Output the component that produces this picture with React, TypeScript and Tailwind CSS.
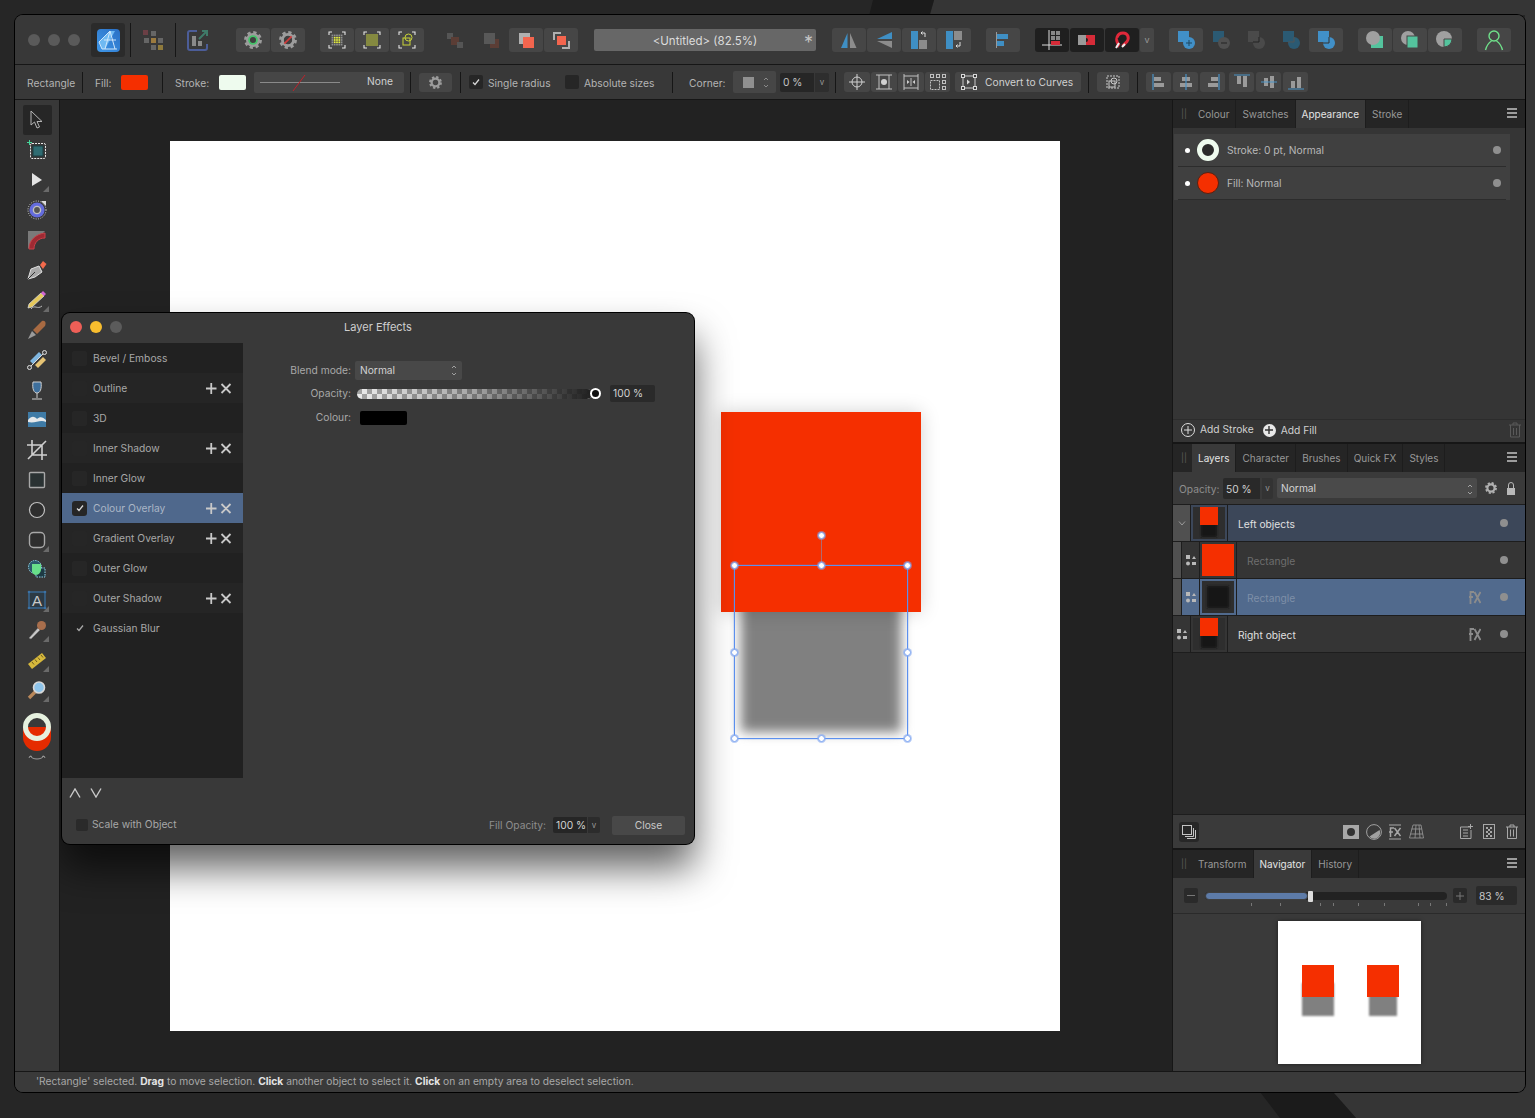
import type { ReactNode } from "react";

const RED = "#f52f00";

function Cog({ size = 18, color = "#9c9c9c", children }: { size?: number; color?: string; children?: ReactNode }) {
  return (
    <svg width={size} height={size} viewBox="0 0 20 20">
      <circle cx="10" cy="10" r="6" fill="none" stroke={color} strokeWidth="3.6" />
      <circle cx="10" cy="10" r="8.4" fill="none" stroke={color} strokeWidth="3" strokeDasharray="3.6 3" />
      {children}
    </svg>
  );
}

function Dot({ className = "" }: { className?: string }) {
  return <span className={`block w-2 h-2 rounded-full bg-[#8f8f8f] ${className}`} />;
}

function Sep({ className = "" }: { className?: string }) {
  return <span className={`block w-px bg-[#161616] ${className}`} />;
}

function Tb({ dark, wide, className = "", children }: { dark?: boolean; wide?: boolean; className?: string; children?: ReactNode }) {
  return (
    <div className={`${wide ? "w-[35px]" : "w-[34px]"} h-6 flex items-center justify-center rounded-[3px] ${dark ? "bg-[#1f1f1f]" : "bg-[#464646]"} ${className}`}>
      {children}
    </div>
  );
}

function Sb({ className = "", children }: { className?: string; children?: ReactNode }) {
  return <div className={`h-5 flex items-center justify-center rounded-[3px] bg-[#464646] ${className}`}>{children}</div>;
}

function Corners() {
  return <path d="M2 5V2H5M15 2H18V5M18 15V18H15M5 18H2V15" fill="none" stroke="#e6e6e6" strokeWidth="1.1" />;
}

function DotGrid({ n, step, size, color }: { n: number; step: number; size: number; color: (x: number, y: number) => string }) {
  const start = 10 - ((n - 1) * step + size) / 2;
  const cells = [];
  for (let y = 0; y < n; y++) {
    for (let x = 0; x < n; x++) {
      cells.push(<rect key={`${x}-${y}`} x={start + x * step} y={start + y * step} width={size} height={size} fill={color(x, y)} />);
    }
  }
  return <>{cells}</>;
}

function TopBar() {
  return (
    <div className="h-[50px] pt-px shrink-0 flex items-center bg-[#383838] border-b border-[#161616]">
      <div className="ml-[13px] flex gap-2">
        <span className="w-3 h-3 rounded-full bg-[#5a5a5a]" />
        <span className="w-3 h-3 rounded-full bg-[#5a5a5a]" />
        <span className="w-3 h-3 rounded-full bg-[#5a5a5a]" />
      </div>
      <div className="ml-[11px] w-[34px] h-[34px] rounded-[3px] bg-[#2b2b2b] flex items-center justify-center">
        <svg width="25" height="25" viewBox="0 0 25 25">
          <defs>
            <linearGradient id="appg" x1="0" y1="1" x2="1" y2="0">
              <stop offset="0" stopColor="#3f97e8" />
              <stop offset="1" stopColor="#2a6fc4" />
            </linearGradient>
          </defs>
          <rect x="1" y="1" width="23" height="23" rx="4" fill="url(#appg)" />
          <path d="M3 14L14 3H19L9 21H6Z" fill="#6fb9f2" />
          <path d="M3 14L14 3M14 3L19 21M9 21L14 3M3 14L6 21H21M8 12H20" fill="none" stroke="#cfe6fa" strokeWidth="1" />
        </svg>
      </div>
      <Sep className="ml-[5px] h-[34px]" />
      <svg className="ml-3" width="20" height="20" viewBox="0 0 20 20">
        <rect x="0" y="0" width="5" height="5" fill="#6b3f45" />
        <rect x="8" y="1" width="5" height="5" fill="#666" />
        <rect x="1" y="8" width="5" height="5" fill="#666" />
        <rect x="8" y="8" width="5" height="5" fill="#9b7a3f" />
        <rect x="15" y="8" width="5" height="5" fill="#666" />
        <rect x="8" y="15" width="5" height="5" fill="#666" />
        <rect x="15" y="15" width="5" height="5" fill="#8f7a3c" />
      </svg>
      <Sep className="ml-3 h-[34px]" />
      <svg className="ml-[11px]" width="22" height="22" viewBox="0 0 22 22">
        <path d="M10 2H3a2 2 0 0 0-2 2v15a2 2 0 0 0 2 2h15a2 2 0 0 0 2-2v-4" fill="none" stroke="#4c5d98" strokeWidth="2" />
        <rect x="5" y="7" width="4" height="10" fill="#8a8a8a" />
        <rect x="11" y="12" width="4" height="5" fill="#8a8a8a" />
        <path d="M12 10L20 2M15 2H20V7" fill="none" stroke="#3f7a68" strokeWidth="2" />
      </svg>
      <div className="ml-[27px] flex gap-px">
        <Tb>
          <Cog>
            <circle cx="10" cy="10" r="4.4" fill="#3f3f3f" stroke="#45c46a" strokeWidth="2" />
          </Cog>
        </Tb>
        <Tb>
          <Cog>
            <circle cx="10" cy="10" r="4.6" fill="#3f3f3f" />
            <path d="M6 14L14 6" stroke="#d03a3a" strokeWidth="2" />
          </Cog>
        </Tb>
      </div>
      <div className="ml-[15px] flex gap-px">
        <Tb>
          <svg width="20" height="20" viewBox="0 0 20 20">
            <Corners />
            <DotGrid n={5} step={2.3} size={1.7} color={(x, y) => (x > 0 && x < 4 && y > 0 && y < 4 ? "#e9f23e" : "#8f8f8f")} />
          </svg>
        </Tb>
        <Tb>
          <svg width="20" height="20" viewBox="0 0 20 20">
            <Corners />
            <DotGrid n={6} step={2} size={1.3} color={() => "#dbe63a"} />
          </svg>
        </Tb>
        <Tb>
          <svg width="20" height="20" viewBox="0 0 20 20">
            <Corners />
            <rect x="6" y="8" width="7" height="7" fill="none" stroke="#c9d436" />
            <circle cx="11.5" cy="7.5" r="3.5" fill="none" stroke="#c9d436" />
          </svg>
        </Tb>
      </div>
      <div className="ml-[14px] flex gap-px">
        <Tb wide className="bg-transparent">
          <svg width="17" height="17" viewBox="0 0 17 17">
            <rect x="0" y="1" width="6" height="6" fill="#555" />
            <rect x="4" y="5" width="8" height="8" fill="#5b3d35" />
            <rect x="10" y="10" width="6" height="6" fill="#555" />
          </svg>
        </Tb>
        <Tb className="bg-transparent">
          <svg width="17" height="17" viewBox="0 0 17 17">
            <rect x="7" y="7" width="9" height="9" fill="#5b3d35" />
            <rect x="1" y="1" width="11" height="11" fill="#585858" />
          </svg>
        </Tb>
        <Tb>
          <svg width="17" height="17" viewBox="0 0 17 17">
            <rect x="1" y="1" width="11" height="11" fill="#b0b0b0" />
            <rect x="5" y="5" width="11" height="11" fill="#f3654e" />
          </svg>
        </Tb>
        <Tb>
          <svg width="17" height="17" viewBox="0 0 17 17">
            <path d="M1 8V1H8M16 9V16H9" fill="none" stroke="#b0b0b0" strokeWidth="2" />
            <rect x="4" y="4" width="9" height="9" fill="#f3654e" />
          </svg>
        </Tb>
      </div>
      <div className="ml-[16px] w-[222px] h-[22px] rounded-[2px] bg-[#676767] flex items-center relative">
        <span className="w-full text-center text-[#dcdcdc] text-[11.5px] pt-[3px]">&lt;Untitled&gt; (82.5%)</span>
        <span className="absolute right-[3px] top-0 text-[#c4c4c4] text-[18px]">*</span>
      </div>
      <div className="ml-4 flex gap-px">
        <Tb>
          <svg width="20" height="20" viewBox="0 0 20 20">
            <path d="M8.5 3V18H2Z" fill="#3f8fc4" />
            <path d="M11 3V18H17.5Z" fill="#8c8c8c" />
          </svg>
        </Tb>
        <Tb>
          <svg width="20" height="20" viewBox="0 0 20 20">
            <path d="M18 2V9H3Z" fill="#3f8fc4" />
            <path d="M18 18V11H3Z" fill="#8c8c8c" />
          </svg>
        </Tb>
        <Tb>
          <svg width="20" height="20" viewBox="0 0 20 20">
            <rect x="2" y="1" width="7" height="18" fill="#3f8fc4" />
            <rect x="10" y="10" width="8" height="9" fill="#8c8c8c" />
            <path d="M16 7V3H12M13.5 1.5L12 3L13.5 4.5" fill="none" stroke="#ddd" />
          </svg>
        </Tb>
        <Tb>
          <svg width="20" height="20" viewBox="0 0 20 20">
            <rect x="2" y="1" width="7" height="18" fill="#3f8fc4" />
            <rect x="10" y="1" width="8" height="9" fill="#8c8c8c" />
            <path d="M16 12V16H12M13.5 14.5L12 16L13.5 17.5" fill="none" stroke="#ddd" />
          </svg>
        </Tb>
      </div>
      <Tb className="ml-[15px]">
        <svg width="18" height="18" viewBox="0 0 18 18">
          <path d="M2.5 1V17" stroke="#999" />
          <rect x="3" y="3" width="11" height="5" fill="#3f8fc4" />
          <rect x="3" y="10" width="7" height="5" fill="#3f8fc4" />
        </svg>
      </Tb>
      <div className="ml-[15px] flex gap-px">
        <Tb dark>
          <svg width="22" height="22" viewBox="0 0 22 22">
            <path d="M1 16H21M8 1V21" stroke="#ddd" />
            <rect x="10" y="2" width="4" height="4" fill="#888" />
            <rect x="15" y="2" width="4" height="4" fill="#888" />
            <rect x="10" y="7" width="4" height="4" fill="#888" />
            <rect x="15" y="7" width="4" height="4" fill="#888" />
            <rect x="10" y="12" width="9" height="4" fill="#d62b38" />
          </svg>
        </Tb>
        <Tb dark>
          <svg width="20" height="14" viewBox="0 0 20 14">
            <rect x="1" y="2" width="8" height="10" fill="#9a9a9a" />
            <path d="M9 2H18V12H9V9a2 2 0 0 0 0-4Z" fill="#d62b38" />
          </svg>
        </Tb>
        <Tb dark>
          <svg width="20" height="20" viewBox="0 0 20 20">
            <path d="M5 17L6.5 14.5C3 10 5 3 11 3C16 3 17.5 8 15 11.5L10.5 16" fill="none" stroke="#e0283a" strokeWidth="3" />
            <path d="M4 18L7 13M10 17L13 14" stroke="#eee" strokeWidth="2" />
            <path d="M6 9.5L10 6.5" stroke="#1f1f1f" strokeWidth="2" />
          </svg>
        </Tb>
        <div className="w-3.5 h-6 rounded-[2px] bg-[#464646] flex items-center justify-center text-[#999] text-[9px]">v</div>
      </div>
      <div className="ml-[15px] flex gap-px">
        <Tb>
          <svg width="20" height="20" viewBox="0 0 20 20">
            <rect x="2" y="1" width="11" height="11" fill="#4190c8" />
            <circle cx="13" cy="13" r="6" fill="#4190c8" />
            <path d="M10 13H16M13 10V16" stroke="#1c4660" />
          </svg>
        </Tb>
        <Tb className="bg-transparent">
          <svg width="20" height="20" viewBox="0 0 20 20">
            <rect x="2" y="1" width="11" height="11" fill="#2b5a73" />
            <circle cx="13" cy="13" r="6" fill="#505050" />
            <path d="M10 13H16" stroke="#222" />
          </svg>
        </Tb>
        <Tb className="bg-transparent">
          <svg width="20" height="20" viewBox="0 0 20 20">
            <rect x="2" y="1" width="11" height="11" fill="#4a4a4a" />
            <circle cx="13" cy="13" r="6" fill="#4a4a4a" />
            <path d="M13 7V12H7" fill="none" stroke="#222" />
          </svg>
        </Tb>
        <Tb className="bg-transparent">
          <svg width="20" height="20" viewBox="0 0 20 20">
            <rect x="2" y="1" width="11" height="11" fill="#2b5a73" />
            <circle cx="13" cy="13" r="6" fill="#2b5a73" />
            <path d="M13 7V12H7" fill="none" stroke="#555" />
          </svg>
        </Tb>
        <Tb>
          <svg width="20" height="20" viewBox="0 0 20 20">
            <rect x="2" y="1" width="11" height="11" fill="#4190c8" />
            <circle cx="13" cy="13" r="6" fill="#4190c8" />
            <path d="M13 7V13H7" fill="none" stroke="#333" />
          </svg>
        </Tb>
      </div>
      <div className="ml-[15px] flex gap-px">
        <Tb>
          <svg width="20" height="20" viewBox="0 0 20 20">
            <rect x="6" y="6" width="12" height="12" fill="#54c39d" />
            <circle cx="8" cy="8" r="7" fill="#a0a0a0" />
          </svg>
        </Tb>
        <Tb>
          <svg width="20" height="20" viewBox="0 0 20 20">
            <circle cx="8" cy="8" r="7" fill="#a0a0a0" />
            <rect x="7" y="6" width="11" height="12" fill="#54c39d" stroke="#464646" />
          </svg>
        </Tb>
        <Tb>
          <svg width="20" height="20" viewBox="0 0 20 20">
            <circle cx="9" cy="9" r="8" fill="#a0a0a0" />
            <path d="M9 9H17a8 8 0 0 1-8 8Z" fill="#54c39d" stroke="#464646" />
          </svg>
        </Tb>
      </div>
      <Tb className="ml-[15px]">
        <svg width="20" height="22" viewBox="0 0 20 22">
          <circle cx="10" cy="7" r="5" fill="none" stroke="#6fe08a" strokeWidth="1.4" />
          <path d="M1.5 21C3 15 6 13 7.5 12M18.5 21C17 15 14 13 12.5 12" fill="none" stroke="#6fe08a" strokeWidth="1.4" />
        </svg>
      </Tb>
    </div>
  );
}

function Check({ on, className = "" }: { on?: boolean; className?: string }) {
  return (
    <span className={`flex items-center justify-center rounded-[2px] bg-[#262626] ${className}`}>
      {on && (
        <svg width="8" height="8" viewBox="0 0 8 8">
          <path d="M1 4.5L3 6.5L7 1.5" fill="none" stroke="#d8d8d8" strokeWidth="1.3" />
        </svg>
      )}
    </span>
  );
}

function ContextBar() {
  return (
    <div className="h-[35px] shrink-0 flex items-center bg-[#383838] border-b border-[#161616] text-[10.25px] text-[#b4b4b4]">
      <span className="ml-[12px] w-[48px] pt-1">Rectangle</span>
      <Sep className="ml-[7px] h-[21px]" />
      <span className="ml-3 w-[17px] pt-1">Fill:</span>
      <span className="ml-[9px] w-[27px] h-[15px] rounded-[2px] bg-[#f52f00]" />
      <Sep className="ml-[14px] h-[21px]" />
      <span className="ml-3 w-[35px] pt-1">Stroke:</span>
      <span className="ml-[9px] w-[27px] h-[15px] rounded-[2px] bg-[#eefbee]" />
      <div className="ml-2 w-[150px] h-[21px] rounded-[2px] bg-[#464646] flex items-center relative">
        <span className="ml-1.5 w-[80px] h-px bg-[#8a8a8a]" />
        <svg className="absolute left-[37px] top-[3px]" width="16" height="16" viewBox="0 0 16 16">
          <path d="M2 16L14 0" stroke="#c0222c" strokeWidth="1" />
        </svg>
        <span className="absolute right-[11px] text-[#d0d0d0]">None</span>
      </div>
      <Sep className="ml-1.5 h-[21px]" />
      <Sb className="ml-2 w-[33px] h-[19px]">
        <Cog size={13} />
      </Sb>
      <Sep className="ml-2 h-[21px]" />
      <Check on className="ml-2 w-[14px] h-[14px]" />
      <span className="ml-[5px] w-[63px] pt-1">Single radius</span>
      <Check className="ml-[14px] w-[14px] h-[14px]" />
      <span className="ml-[5px] w-[70px] pt-1">Absolute sizes</span>
      <Sep className="ml-[18px] h-[21px]" />
      <span className="ml-4 w-[37px] pt-1">Corner:</span>
      <div className="ml-[7px] w-[43px] h-[22px] rounded-[2px] bg-[#464646] flex items-center">
        <span className="ml-2.5 w-[11px] h-[11px] bg-[#909090]" />
        <svg className="ml-[9px]" width="6" height="13" viewBox="0 0 6 13">
          <path d="M1 4L3 2L5 4M1 9L3 11L5 9" fill="none" stroke="#8a8a8a" />
        </svg>
      </div>
      <div className="ml-1 w-[34px] h-[19px] rounded-l-[2px] bg-[#262626] flex items-center pl-[3px] pt-0.5 text-[#c4c4c4]">0 %</div>
      <div className="ml-px w-3.5 h-[19px] rounded-r-[2px] bg-[#2e2e2e] flex items-center justify-center text-[8px] text-[#999]">v</div>
      <Sep className="ml-1.5 h-[21px]" />
      <div className="ml-2 flex gap-px">
        <Sb className="w-[26px]">
          <svg width="16" height="16" viewBox="0 0 16 16">
            <circle cx="8" cy="8" r="5" fill="none" stroke="#d0d0d0" />
            <path d="M8 0V16M0 8H16" stroke="#d0d0d0" />
          </svg>
        </Sb>
        <Sb className="w-[26px]">
          <svg width="16" height="16" viewBox="0 0 16 16">
            <path d="M0 1H16M0 15H16M3 1V15M13 1V15" fill="none" stroke="#c0c0c0" />
            <circle cx="8" cy="8" r="3" fill="#d0d0d0" />
          </svg>
        </Sb>
        <Sb className="w-[26px]">
          <svg width="16" height="16" viewBox="0 0 16 16">
            <path d="M1 0V16M15 0V16M1 2H15M1 14H15M8 4V12" fill="none" stroke="#c0c0c0" />
            <path d="M4 6L6.5 8L4 10ZM12 6L9.5 8L12 10Z" fill="#d0d0d0" />
          </svg>
        </Sb>
        <Sb className="w-[25px]">
          <svg width="16" height="16" viewBox="0 0 16 16" fill="none" stroke="#c0c0c0">
            <rect x="0.5" y="0.5" width="3" height="3" />
            <rect x="6.5" y="0.5" width="3" height="3" />
            <rect x="12.5" y="0.5" width="3" height="3" />
            <rect x="12.5" y="6.5" width="3" height="3" />
            <rect x="12.5" y="12.5" width="3" height="3" />
            <rect x="0.5" y="6.5" width="9" height="9" strokeDasharray="2 1" />
          </svg>
        </Sb>
      </div>
      <Sb className="ml-[5px] w-[126px] justify-start pl-1.5">
        <svg className="mr-2" width="16" height="16" viewBox="0 0 16 16">
          <rect x="2" y="2" width="12" height="12" fill="none" stroke="#c8c8c8" />
          <rect x="0.5" y="0.5" width="3" height="3" fill="#383838" stroke="#d8d8d8" />
          <rect x="12.5" y="0.5" width="3" height="3" fill="#383838" stroke="#d8d8d8" />
          <rect x="0.5" y="12.5" width="3" height="3" fill="#383838" stroke="#d8d8d8" />
          <rect x="12.5" y="12.5" width="3" height="3" fill="#383838" stroke="#d8d8d8" />
          <path d="M6 5.5L9 8L6 10.5Z" fill="#d8d8d8" />
        </svg>
        <span className="text-[#d0d0d0] pt-0.5">Convert to Curves</span>
      </Sb>
      <Sep className="ml-[7px] h-[21px]" />
      <Sb className="ml-[8px] w-[32px]">
        <svg width="18" height="18" viewBox="0 0 18 18" fill="none" stroke="#c8c8c8">
          <rect x="3" y="3" width="12" height="12" strokeDasharray="2 1" />
          <rect x="5" y="8" width="6" height="6" />
          <circle cx="10" cy="8" r="3" />
        </svg>
      </Sb>
      <Sep className="ml-2 h-[21px]" />
      <div className="ml-2 flex gap-0.5">
        <AlignBtn d="M3 1V17" a="M4 4H11V8H4ZM4 10H14V14H4Z" />
        <AlignBtn d="M9 1V17" a="M5 4H13V8H5ZM3 10H15V14H3Z" />
        <AlignBtn d="M15 1V17" a="M7 4H14V8H7ZM4 10H14V14H4Z" />
      </div>
      <div className="ml-1 flex gap-0.5">
        <AlignBtn d="M1 2H17" a="M4 3H8V11H4ZM10 3H14V14H10Z" />
        <AlignBtn d="M1 9H17" a="M4 5H8V13H4ZM10 3H14V15H10Z" />
        <AlignBtn d="M1 16H17" a="M4 8H8V15H4ZM10 4H14V15H10Z" />
      </div>
    </div>
  );
}

function AlignBtn({ d, a }: { d: string; a: string }) {
  return (
    <Sb className="w-[25px]">
      <svg width="18" height="18" viewBox="0 0 18 18">
        <path d={a} fill="#9a9a9a" />
        <path d={d} stroke="#4a93c6" strokeWidth="1.2" />
      </svg>
    </Sb>
  );
}

function Flyout() {
  return (
    <svg className="absolute right-[3px] bottom-[3px]" width="6" height="6" viewBox="0 0 6 6">
      <path d="M6 0V6H0Z" fill="#6a6a6a" />
    </svg>
  );
}

const TOOLS: { node: ReactNode; fly?: boolean; active?: boolean }[] = [
  { active: true, node: <path d="M4 1V15L7.5 12L10 18L12.5 17L10 11.5H15Z" fill="#262626" stroke="#b5b5b5" /> },
  {
    node: (
      <>
        <rect x="6" y="6" width="10" height="10" fill="#2f6c72" stroke="#1d3d40" />
        <rect x="3.5" y="3.5" width="15" height="15" rx="1.5" fill="none" stroke="#e8e8e8" strokeDasharray="2 1" />
        <path d="M0 2.5H5M2.5 0V5" stroke="#46d69a" />
      </>
    ),
  },
  { fly: true, node: <path d="M5 3V16L15 10Z" fill="#e4e4e4" /> },
  {
    node: (
      <>
        <circle cx="10" cy="10" r="9" fill="none" stroke="#d0d0d0" strokeDasharray="1 1.4" />
        <circle cx="10" cy="10" r="7.6" fill="#646cdc" />
        <circle cx="10" cy="10" r="3.6" fill="#555" stroke="#c0c0c0" strokeWidth="1.4" />
        <path d="M14 1H19V6Z" fill="#dcdcdc" />
      </>
    ),
  },
  {
    node: (
      <>
        <path d="M1 19V1H18L1 19Z" fill="#7a7a7a" />
        <path d="M2 19C2 10 9 4 18 3V8C11 8 7 13 7 19Z" fill="#9e2a33" stroke="#c84048" />
      </>
    ),
  },
  {
    node: (
      <>
        <path d="M1 19L4 9L12 6L15 12L8 17Z" fill="#a8a8a8" stroke="#e0e0e0" />
        <path d="M1 19L8 12" stroke="#333" />
        <path d="M13 5L16 1L19.5 4L16 9Z" fill="#f36a4c" />
      </>
    ),
  },
  {
    fly: true,
    node: (
      <>
        <path d="M2 14L14 3L17 6L5 17L1 18Z" fill="#e6c95a" stroke="#d8d8d8" strokeWidth="0.8" />
        <path d="M14 3L16 1L19 4L17 6Z" fill="#d264d0" />
        <path d="M4 19C8 14 10 20 15 16" fill="none" stroke="#b8b8b8" />
      </>
    ),
  },
  {
    node: (
      <>
        <path d="M1 19L5 11L9 15Z" fill="#9a9a9a" />
        <path d="M6 10L15 1C19 0 19 4 18 6L10 14Z" fill="#a86a42" />
      </>
    ),
  },
  {
    node: (
      <>
        <path d="M3 11L12 2L15 5L6 14Z" fill="#7fb6e0" />
        <path d="M8 15L16 7L19 10L11 18Z" fill="#e6c374" />
        <path d="M2 18L18 2" stroke="#d8d8d8" />
        <circle cx="2.5" cy="17.5" r="2" fill="#444" stroke="#ddd" />
        <circle cx="17.5" cy="2.5" r="2" fill="#444" stroke="#ddd" />
      </>
    ),
  },
  {
    node: (
      <>
        <path d="M6 2C5 9 7 13 10 13C13 13 15 9 14 2Z" fill="#3e6f9c" stroke="#cfcfcf" />
        <path d="M10 13V18M5 19H15" stroke="#cfcfcf" />
      </>
    ),
  },
  {
    node: (
      <>
        <rect x="1" y="2" width="18" height="15" fill="#3f7ba6" />
        <path d="M1 10C5 5 8 7 10 9C13 6 16 7 19 10V12C13 9 8 14 1 12Z" fill="#e4e8ea" />
      </>
    ),
  },
  {
    node: <path d="M5 0V15H20M0 5H15V20M1 19L19 1" fill="none" stroke="#cfcfcf" strokeWidth="1.6" />,
  },
  { node: <rect x="2.5" y="2.5" width="15" height="15" rx="1" fill="#2a3233" stroke="#a8a8a8" strokeWidth="1.4" /> },
  { node: <circle cx="10" cy="10" r="7.5" fill="#2e2e2e" stroke="#c0c0c0" strokeWidth="1.2" /> },
  { fly: true, node: <rect x="2.5" y="2.5" width="15" height="15" rx="4" fill="#2e2e2e" stroke="#a8a8a8" strokeWidth="1.4" /> },
  {
    node: (
      <>
        <circle cx="8" cy="7" r="6.5" fill="#2b5a6a" stroke="#8fd0e8" strokeDasharray="1.5 1" />
        <rect x="9" y="8" width="9" height="9" fill="#1d3a44" stroke="#8fd0e8" strokeDasharray="1.5 1" />
        <path d="M5 4H14V10A6 6 0 0 1 8 15A6 6 0 0 1 5 12Z" fill="#68e08a" />
      </>
    ),
  },
  {
    fly: true,
    node: (
      <>
        <rect x="2" y="2" width="16" height="16" fill="#2d3a44" stroke="#3a72a6" strokeWidth="1.2" />
        <circle cx="2" cy="2" r="1.3" fill="#3a72a6" />
        <circle cx="18" cy="2" r="1.3" fill="#3a72a6" />
        <circle cx="2" cy="18" r="1.3" fill="#3a72a6" />
        <circle cx="18" cy="18" r="1.3" fill="#3a72a6" />
        <text x="10" y="15.5" fontSize="15" textAnchor="middle" fill="#c8c8c8" fontFamily="Liberation Sans, sans-serif">A</text>
      </>
    ),
  },
  {
    fly: true,
    node: (
      <>
        <path d="M2 18L11 8L13 10L4 19Z" fill="#c8c8c8" stroke="#777" strokeWidth="0.5" />
        <circle cx="14.5" cy="5.5" r="4.5" fill="#a86e4c" />
      </>
    ),
  },
  {
    fly: true,
    node: (
      <>
        <path d="M1 14L15 3L19 8L5 19Z" fill="#d6b83c" />
        <path d="M5 12L7 14.5M8 9.5L10 12M11 7.5L13 10M14 5L16 7.5" stroke="#6e5d1e" />
      </>
    ),
  },
  {
    fly: true,
    node: (
      <>
        <path d="M2 18L8 12" stroke="#b8875a" strokeWidth="3.4" />
        <circle cx="12" cy="7.5" r="5.5" fill="#8ec4ea" stroke="#d8d8d8" strokeWidth="1.6" />
      </>
    ),
  },
];

function ToolRail() {
  return (
    <div className="w-[45px] shrink-0 flex flex-col items-center pt-[5px] bg-[#383838] border-r border-[#161616]">
      {TOOLS.map((t, i) => (
        <div key={i} className={`relative w-[29px] h-[30px] flex items-center justify-center rounded-[2px] ${t.active ? "bg-[#262626]" : ""}`}>
          <svg width="20" height="20" viewBox="0 0 20 20">
            {t.node}
          </svg>
          {t.fly && <Flyout />}
        </div>
      ))}
      <svg className="mt-[7px]" width="30" height="50" viewBox="0 0 30 50">
        <circle cx="15" cy="25" r="14" fill="#e52b00" />
        <rect x="1" y="15" width="28" height="10" fill="#e52b00" />
        <circle cx="15" cy="15" r="9.5" fill="#3a3a3a" />
        <path d="M5.5 15H24.5A9.5 9.5 0 0 1 5.5 15Z" fill="#e52b00" />
        <circle cx="15" cy="15" r="11.5" fill="none" stroke="#e6f1df" strokeWidth="5" />
        <path d="M8 44C11 48 19 48 22 44M8 44L7 46M8 44L10 44.5M22 44L23 46M22 44L20 44.5" fill="none" stroke="#999" />
      </svg>
    </div>
  );
}

function Handle({ className }: { className: string }) {
  return <span className={`absolute w-[7px] h-[7px] rounded-full bg-white border border-[#7ea6f2] shadow-[0_0_0_1px_rgba(130,165,240,0.55)] ${className}`} />;
}

const EFFECTS: { name: string; plus?: boolean; shade?: boolean; on?: boolean; tick?: boolean }[] = [
  { name: "Bevel / Emboss", shade: true },
  { name: "Outline", plus: true },
  { name: "3D", shade: true },
  { name: "Inner Shadow", plus: true },
  { name: "Inner Glow", shade: true },
  { name: "Colour Overlay", plus: true, on: true },
  { name: "Gradient Overlay", plus: true },
  { name: "Outer Glow" },
  { name: "Outer Shadow", plus: true },
  { name: "Gaussian Blur", tick: true },
];

function LayerEffects() {
  return (
    <div className="absolute left-[2px] top-[213px] w-[632px] h-[531px] rounded-[8px] bg-[#393939] ring-1 ring-black flex flex-col text-[10.25px] text-[#a8a8a8] shadow-[0_24px_38px_rgba(0,0,0,0.62)] overflow-hidden">
      <div className="h-[30px] pb-0.5 shrink-0 flex items-center relative">
        <span className="ml-2 w-3 h-3 rounded-full bg-[#ee5f57]" />
        <span className="ml-2 w-3 h-3 rounded-full bg-[#f8bd2e]" />
        <span className="ml-2 w-3 h-3 rounded-full bg-[#5b5b5b]" />
        <span className="absolute inset-x-0 text-center text-[11px] text-[#cfcfcf]">Layer Effects</span>
      </div>
      <div className="flex h-[435px] shrink-0">
        <div className="w-[181px] bg-[#212121]">
          {EFFECTS.map((e) => (
            <div
              key={e.name}
              className={`h-[30px] flex items-center relative ${e.on ? "bg-[#4f688c]" : e.plus && !e.on ? "bg-[#252525]" : "bg-[#212121]"}`}
            >
              {e.on ? (
                <Check on className="ml-[10px] w-[15px] h-[15px] bg-[#222] rounded-[3px]" />
              ) : e.tick ? (
                <svg className="ml-[13px] mr-[2px]" width="10" height="10" viewBox="0 0 10 10">
                  <path d="M2 5.5L4 7.5L8 2.5" fill="none" stroke="#a8a8a8" strokeWidth="1.3" />
                </svg>
              ) : (
                <span className="ml-[10px] w-[15px] h-[15px] rounded-[2px] bg-[#262626]" />
              )}
              <span className={`ml-[6px] pt-0.5 ${e.on ? "text-[#aab6c6]" : ""}`}>{e.name}</span>
              {e.plus && (
                <svg className="absolute left-[144px]" width="26" height="11" viewBox="0 0 26 11">
                  <path d="M0 5.5H10.5M5.25 0V11M15.5 1L24.5 10M24.5 1L15.5 10" stroke="#c8c8c8" strokeWidth="1.8" />
                </svg>
              )}
            </div>
          ))}
        </div>
        <div className="flex-1 pt-[18px]">
          <div className="flex items-center h-[19px]">
            <span className="w-[108px] text-right">Blend mode:</span>
            <div className="ml-1 w-[107px] h-[19px] rounded-[2px] bg-[#484848] flex items-center justify-between px-[5px] text-[#d2d2d2]">
              Normal
              <svg width="6" height="13" viewBox="0 0 6 13">
                <path d="M1 4L3 2L5 4M1 9L3 11L5 9" fill="none" stroke="#a0a0a0" />
              </svg>
            </div>
          </div>
          <div className="flex items-center h-[17px] mt-[5px]">
            <span className="w-[108px] text-right">Opacity:</span>
            <div className="ml-1.5 w-[235px] h-2.5 shrink-0 rounded-full overflow-hidden bg-[conic-gradient(#ececec_25%,#a4a4a4_0_50%,#ececec_0_75%,#a4a4a4_0)] bg-[length:10px_10px]">
              <div className="w-full h-full bg-gradient-to-r from-transparent via-[rgba(31,31,31,0.35)] to-[#1f1f1f]" />
            </div>
            <span className="ml-[-2px] w-[11px] h-[11px] rounded-full border-2 border-white bg-[#111] shrink-0" />
            <div className="ml-[9px] w-[45px] h-[17px] rounded-[2px] bg-[#2a2a2a] flex items-center pl-[3px] text-[#d2d2d2]">100 %</div>
          </div>
          <div className="flex items-center h-[14px] mt-[9px]">
            <span className="w-[108px] text-right">Colour:</span>
            <span className="ml-[9px] w-[47px] h-[14px] rounded-[2px] bg-black" />
          </div>
        </div>
      </div>
      <div className="h-[30px] shrink-0 flex items-center pl-[7px] gap-[9px]">
        <svg width="12" height="10" viewBox="0 0 12 10">
          <path d="M1 9.5L6 1L11 9.5" fill="none" stroke="#c8c8c8" strokeWidth="1.4" />
        </svg>
        <svg width="12" height="10" viewBox="0 0 12 10">
          <path d="M1 0.5L6 9L11 0.5" fill="none" stroke="#c8c8c8" strokeWidth="1.4" />
        </svg>
      </div>
      <div className="flex items-center h-[34px] shrink-0 pl-[14px]">
        <span className="w-3 h-3 rounded-[2px] bg-[#2a2a2a]" />
        <span className="ml-1">Scale with Object</span>
        <span className="ml-auto text-[#8e8e8e] pt-0.5">Fill Opacity:</span>
        <div className="ml-[7px] w-[34px] h-4 rounded-l-[2px] bg-[#262626] flex items-center pl-[3px] pt-0.5 text-[#d2d2d2]">100 %</div>
        <div className="ml-px w-3 h-4 rounded-r-[2px] bg-[#2c2c2c] flex items-center justify-center text-[8px] text-[#999]">v</div>
        <div className="ml-[12px] mr-[9px] w-[73px] h-[19px] rounded-[2px] bg-[#484848] flex items-center justify-center pt-0.5 text-[#c8c8c8]">Close</div>
      </div>
    </div>
  );
}

function Canvas() {
  return (
    <div className="flex-1 relative overflow-hidden bg-[#222222]">
      <div className="absolute left-[110px] top-[41px] w-[890px] h-[890px] bg-white" />
      <div className="absolute left-[681px] top-[472px] w-[160px] h-[160px] bg-[#808080] blur-[6px]" />
      <div className="absolute left-[661px] top-[312px] w-[200px] h-[200px] bg-[#f52f00] shadow-[0_0_18px_rgba(0,0,0,0.18)]" />
      <div className="absolute left-[674px] top-[465px] w-[174px] h-[174px] border border-[#5c90ee] shadow-[0_0_1px_#5c90ee]">
        <span className="absolute left-[86px] top-[-30px] w-px h-[30px] bg-[#b06a70]" />
        <Handle className="left-[83px] top-[-34px]" />
        <Handle className="left-[-4px] top-[-4px]" />
        <Handle className="left-[83px] top-[-4px]" />
        <Handle className="right-[-4px] top-[-4px]" />
        <Handle className="left-[-4px] top-[83px]" />
        <Handle className="right-[-4px] top-[83px]" />
        <Handle className="left-[-4px] bottom-[-4px]" />
        <Handle className="left-[83px] bottom-[-4px]" />
        <Handle className="right-[-4px] bottom-[-4px]" />
      </div>
      <LayerEffects />
    </div>
  );
}

function Tabs({ tabs, active }: { tabs: string[]; active: string }) {
  return (
    <div className="h-7 shrink-0 flex items-stretch bg-[#252525] text-[10px] relative">
      <span className="ml-[8px] mr-[2px] self-center text-[#5a5a5a] text-[9px] w-[9px]">||</span>
      {tabs.map((t) => (
        <div
          key={t}
          className={`px-[6px] flex items-center border-r border-[#1d1d1d] ${t === active ? "bg-[#3a3a3a] text-[#e4e4e4]" : "text-[#989898]"}`}
        >
          {t}
        </div>
      ))}
      <svg className="absolute right-[8px] top-[8px]" width="10" height="10" viewBox="0 0 10 10">
        <path d="M0 1H10M0 5H10M0 9H10" stroke="#c4c4c4" strokeWidth="1.6" />
      </svg>
    </div>
  );
}

function Thumb({ kind }: { kind: "mixed" | "red" | "dark" }) {
  return (
    <svg className="shrink-0" width="32" height="32" viewBox="0 0 32 32">
      <defs>
        <filter id={`th-${kind}`}>
          <feGaussianBlur stdDeviation="1.2" />
        </filter>
      </defs>
      <rect width="32" height="32" fill={kind === "red" ? RED : "#2e2e2e"} />
      {kind === "dark" && <rect x="5" y="5" width="22" height="22" fill="#161616" filter="url(#th-dark)" />}
      {kind === "mixed" && (
        <>
          <rect x="8" y="16" width="16" height="14" fill="#161616" filter="url(#th-mixed)" />
          <rect x="7" y="0" width="18" height="18" fill={RED} />
        </>
      )}
    </svg>
  );
}

function NodeIcon() {
  return (
    <svg width="10" height="11" viewBox="0 0 10 11">
      <rect x="0" y="0" width="4" height="4" fill="#b8b8b8" />
      <path d="M6 4L8 1L10 4Z" fill="#b8b8b8" />
      <circle cx="2" cy="8.5" r="2" fill="#b8b8b8" />
      <rect x="6" y="7" width="4" height="3" fill="#b8b8b8" />
    </svg>
  );
}

function Fx() {
  return (
    <svg className="mr-[19px]" width="12" height="13" viewBox="0 0 12 13" fill="none" stroke="#8c8c8c" strokeWidth="1.8">
      <path d="M5 1H1.5V13M0 6H4M5.5 1L11.5 12M11.5 1L5.5 12" />
    </svg>
  );
}

function LayerRow({ label, bg, dim, fx, cell, thumb, strip }: { label: string; bg: string; dim?: boolean; fx?: boolean; cell: ReactNode; thumb: ReactNode; strip?: boolean }) {
  return (
    <div className={`h-[37px] flex items-stretch border-b border-[#1d1d1d] ${bg}`}>
      {strip && <span className="w-[9px] shrink-0 bg-[#505050] border-r border-[#1d1d1d]" />}
      <div className="w-[17px] shrink-0 flex items-center justify-center">{cell}</div>
      <div className="w-[38px] px-[2px] shrink-0 flex items-center border-x border-[#1d1d1d]">{thumb}</div>
      <span className={`ml-[10px] pt-1 self-center ${dim ? (fx ? "text-[#7e8fa8]" : "text-[#6e6e6e]") : "text-[#e0e0e0]"}`}>{label}</span>
      <div className="ml-auto flex items-center">
        {fx && <Fx />}
        <Dot className="mr-[17px]" />
      </div>
    </div>
  );
}

function RightPanels() {
  return (
    <div className="w-[353px] shrink-0 flex flex-col bg-[#161616] border-l border-[#161616] text-[10.25px] text-[#b8b8b8]">
      {/* Appearance */}
      <div className="h-[342px] shrink-0 flex flex-col bg-[#353535] relative">
        <Tabs tabs={["Colour", "Swatches", "Appearance", "Stroke"]} active="Appearance" />
        <div className="mt-1.5 w-[336px] ml-px bg-[#404040]">
          {[
            { label: "Stroke: 0 pt, Normal", stroke: true },
            { label: "Fill: Normal", stroke: false },
          ].map((r) => (
            <div key={r.label} className="h-[33px] mx-1 flex items-center border-b border-[#2c2c2c] relative">
              <span className="ml-[7px] w-[5px] h-[5px] rounded-full bg-white" />
              {r.stroke ? (
                <span className="ml-[7px] w-[22px] h-[22px] rounded-full bg-[#2b2b2b] border-[5px] border-[#eefbee]" />
              ) : (
                <span className="ml-[7px] w-[22px] h-[22px] rounded-full bg-[#f52f00] border border-[#5a2010]" />
              )}
              <span className="ml-2 pt-0.5">{r.label}</span>
              <Dot className="absolute right-[5px]" />
            </div>
          ))}
        </div>
        <div className="mt-auto h-[23px] pb-0.5 flex items-center border-t border-[#2c2c2c] text-[#d0d0d0]">
          <span className="ml-2 w-3.5 h-3.5 rounded-full border border-[#ddd] flex items-center justify-center">
            <svg width="8" height="8" viewBox="0 0 8 8">
              <path d="M0 4H8M4 0V8" stroke="#ddd" />
            </svg>
          </span>
          <span className="ml-[5px]">Add Stroke</span>
          <span className="ml-[9px] w-[13px] h-[13px] rounded-full bg-[#e8e8e8] flex items-center justify-center">
            <svg width="8" height="8" viewBox="0 0 8 8">
              <path d="M0 4H8M4 0V8" stroke="#333" strokeWidth="1.4" />
            </svg>
          </span>
          <span className="ml-[5px] pt-0.5">Add Fill</span>
          <svg className="ml-auto mr-[4px]" width="12" height="16" viewBox="0 0 12 16" fill="none" stroke="#5a5a5a">
            <path d="M0 3H12M4 3V1H8V3M1.5 3V15H10.5V3M4.5 6V13M7.5 6V13" />
          </svg>
        </div>
      </div>
      {/* Layers */}
      <div className="mt-0.5 h-[404px] shrink-0 flex flex-col bg-[#2a2a2a]">
        <Tabs tabs={["Layers", "Character", "Brushes", "Quick FX", "Styles"]} active="Layers" />
        <div className="h-[33px] shrink-0 flex items-center bg-[#3a3a3a] border-b border-[#1d1d1d]">
          <span className="ml-[6px] w-[40px] pt-1 text-[#8e8e8e]">Opacity:</span>
          <div className="ml-1 w-[37px] h-[21px] rounded-l-[2px] bg-[#292929] flex items-center pl-[3px] pt-1 text-[#d2d2d2]">50 %</div>
          <div className="ml-0.5 w-[11px] h-[21px] rounded-r-[2px] bg-[#333] flex items-center justify-center text-[8px] text-[#999]">v</div>
          <div className="ml-1 w-[200px] h-5 rounded-[2px] bg-[#4a4a4a] flex items-center justify-between px-1 pt-0.5 text-[#d2d2d2]">
            Normal
            <svg width="6" height="13" viewBox="0 0 6 13">
              <path d="M1 4L3 2L5 4M1 9L3 11L5 9" fill="none" stroke="#a0a0a0" />
            </svg>
          </div>
          <span className="ml-2">
            <Cog size={12} color="#b0b0b0" />
          </span>
          <svg className="ml-2.5" width="8" height="13" viewBox="0 0 8 13">
            <path d="M1.5 6V3a2.5 2.5 0 0 1 5 0V6" fill="none" stroke="#b8b8b8" />
            <rect x="0" y="6" width="8" height="7" fill="#b8b8b8" />
          </svg>
        </div>
        <LayerRow
          label="Left objects"
          bg="bg-[#3c4759]"
          cell={
            <span className="w-full h-full bg-[#505050] flex items-center justify-center">
              <svg width="8" height="5" viewBox="0 0 8 5">
                <path d="M1 0.5L4 4L7 0.5" fill="none" stroke="#9a9a9a" />
              </svg>
            </span>
          }
          thumb={<Thumb kind="mixed" />}
        />
        <LayerRow label="Rectangle" bg="bg-[#353535]" dim strip cell={<NodeIcon />} thumb={<Thumb kind="red" />} />
        <LayerRow label="Rectangle" bg="bg-[#516a8d]" dim fx strip cell={<NodeIcon />} thumb={<Thumb kind="dark" />} />
        <LayerRow label="Right object" bg="bg-[#353535]" fx cell={<NodeIcon />} thumb={<Thumb kind="mixed" />} />
        <div className="mt-auto h-[34px] shrink-0 flex items-center bg-[#3a3a3a] border-t border-[#1d1d1d]">
          <div className="ml-[6px] w-[20px] h-[20px] rounded-[3px] bg-[#272727] flex items-center justify-center">
            <svg width="14" height="14" viewBox="0 0 14 14" fill="none" stroke="#c4c4c4">
              <rect x="0.5" y="0.5" width="9" height="9" />
              <path d="M3 11.5H11.5V3M5 13.5H13.5V5" />
            </svg>
          </div>
          <svg className="ml-[144px]" width="16" height="14" viewBox="0 0 16 14">
            <rect width="16" height="14" fill="#a8a8a8" />
            <circle cx="8" cy="7" r="4" fill="#333" />
          </svg>
          <svg className="ml-[7px]" width="16" height="16" viewBox="0 0 16 16">
            <circle cx="8" cy="8" r="7.4" fill="none" stroke="#a0a0a0" />
            <path d="M3.5 12.5A6 6 0 0 0 13.5 6Z" fill="#a0a0a0" />
          </svg>
          <svg className="ml-[7px]" width="12" height="16" viewBox="0 0 12 16" fill="none" stroke="#a8a8a8">
            <path d="M0 1H12M0 15H12" />
            <path d="M5 4H1.5V13M0 8H4M5.5 4L11.5 12M11.5 4L5.5 12" strokeWidth="1.5" />
          </svg>
          <svg className="ml-2" width="15" height="15" viewBox="0 0 15 15" fill="none" stroke="#9c9c9c" strokeWidth="0.8">
            <path d="M4 1H12L14.5 14H0.5ZM7 1L6 14M10 1L11 14M2.5 5H13M1.5 10H14" />
          </svg>
          <svg className="ml-9" width="14" height="15" viewBox="0 0 14 15" fill="none" stroke="#a8a8a8">
            <path d="M10 3H0.5V14.5H11V6M3 6H8M3 9H8M3 12H8M10.5 0V5M8 2.5H13" />
          </svg>
          <svg className="ml-[9px]" width="12" height="15" viewBox="0 0 12 15">
            <rect x="0.5" y="0.5" width="11" height="14" fill="none" stroke="#a8a8a8" />
            <path d="M3 3h2v2H3zM7 3h2v2H7zM5 5h2v2H5zM3 7h2v2H3zM7 7h2v2H7zM5 9h2v2H5zM3 11h2v2H3zM7 11h2v2H7z" fill="#a8a8a8" />
          </svg>
          <svg className="ml-[11px]" width="12" height="15" viewBox="0 0 12 15" fill="none" stroke="#a8a8a8">
            <path d="M0 3H12M4 3V1H8V3M1.5 3V14.5H10.5V3M4.5 5.5V12.5M7.5 5.5V12.5" />
          </svg>
        </div>
      </div>
      {/* Navigator */}
      <div className="mt-0.5 flex-1 flex flex-col bg-[#3a3a3a]">
        <Tabs tabs={["Transform", "Navigator", "History"]} active="Navigator" />
        <div className="h-9 shrink-0 flex items-center border-b border-[#2a2a2a] relative">
          <div className="ml-[11px] w-[14px] h-[15px] rounded-[2px] bg-[#2a2a2a] flex items-center justify-center">
            <span className="w-2 h-px bg-[#777]" />
          </div>
          <div className="ml-[7px] w-[242px] h-2 rounded-full bg-[#222] relative">
            <div className="w-[103px] h-full rounded-full bg-[#5d7ba8] border border-[#3f3f3f]" />
            <span className="absolute left-[103px] top-[-1px] w-[5px] h-[11px] bg-[#dcdcdc] rounded-[1px]" />
            {[47, 76, 116, 129, 154, 180, 214, 226, 242].map((x) => (
              <span key={x} className="absolute top-[11px] w-px h-[3px] bg-[#777]" style={{ left: x - 1 }} />
            ))}
          </div>
          <div className="ml-1.5 w-[14px] h-[15px] rounded-[2px] bg-[#2a2a2a] flex items-center justify-center">
            <svg width="8" height="8" viewBox="0 0 8 8">
              <path d="M0 4H8M4 0V8" stroke="#777" />
            </svg>
          </div>
          <div className="ml-[9px] w-[41px] h-[19px] rounded-[2px] bg-[#2a2a2a] flex items-center pl-[3px] pt-0.5 text-[#c8c8c8]">83 %</div>
        </div>
        <div className="flex-1 flex items-start pt-[7px] pl-[105px]">
          <div className="w-[143px] h-[143px] bg-white relative shadow-[0_0_4px_rgba(0,0,0,0.5)]">
            <div className="absolute left-6 top-[62px] w-8 h-[33px] bg-[#808080] blur-[1px]" />
            <div className="absolute left-[91px] top-[62px] w-[28px] h-[33px] bg-[#808080] blur-[1px]" />
            <div className="absolute left-6 top-[44px] w-8 h-8 bg-[#f52f00]" />
            <div className="absolute left-[89px] top-[44px] w-8 h-8 bg-[#f52f00]" />
          </div>
        </div>
      </div>
    </div>
  );
}

export default function App() {
  return (
    <div className="relative w-[1535px] h-[1118px] overflow-hidden bg-[#262626] pt-[15px] pl-[15px] whitespace-nowrap font-['Inter',sans-serif]">
      <svg className="absolute inset-0" width="1535" height="1118" viewBox="0 0 1535 1118">
        <path d="M934 0H1535V1118H1356L1333 1092L1525 900V15H930Z" fill="#353535" />
        <path d="M873 0H934L928 20H868Z" fill="#1b1b1b" />
        <path d="M1260 1092H1333L1356 1118H1280Z" fill="#1b1b1b" />
      </svg>
      <div className="relative w-[1510px] h-[1077px] rounded-[8px] overflow-hidden ring-1 ring-black flex flex-col bg-[#383838]">
        <TopBar />
        <ContextBar />
        <div className="flex-1 min-h-0 flex border-b border-[#161616]">
          <ToolRail />
          <Canvas />
          <RightPanels />
        </div>
        <div className="h-[20px] shrink-0 flex items-center pl-[21px] bg-[#3a3a3a] text-[10.25px] text-[#a8a8a8]">
          <span>
            'Rectangle' selected. <b className="text-[#e4e4e4]">Drag</b> to move selection. <b className="text-[#e4e4e4]">Click</b> another object to select it. <b className="text-[#e4e4e4]">Click</b> on an empty area to deselect selection.
          </span>
        </div>
      </div>
    </div>
  );
}
